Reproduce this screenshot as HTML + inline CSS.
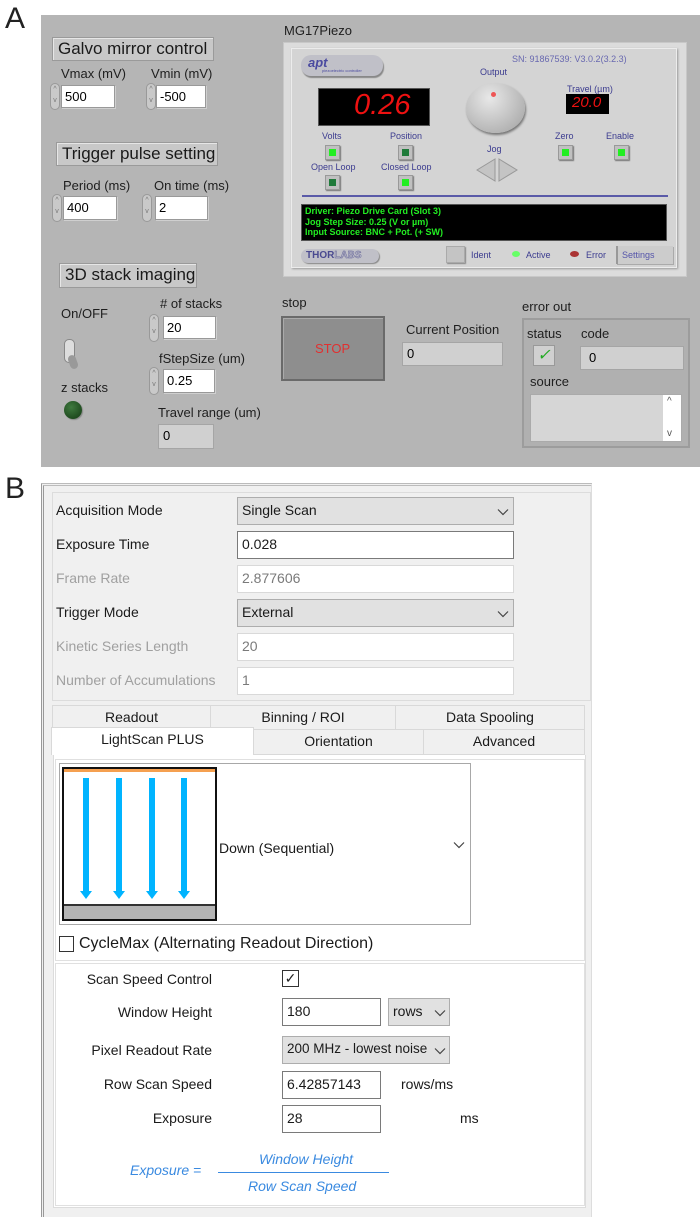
<!DOCTYPE html>
<html><head><meta charset="utf-8"><style>
*{margin:0;padding:0;box-sizing:border-box}
body{width:700px;height:1217px;background:#fff;position:relative;overflow:hidden;font-family:"Liberation Sans",sans-serif}
div,span,svg{position:absolute}
.t{white-space:nowrap;color:#222}
.A{font-size:13px;color:#1e1e1e}
.ttl{background:#c8c8c8;border:1px solid #9a9a9a;box-shadow:inset 1px 1px 0 #e6e6e6;font-size:17px;color:#1a1a1a;padding:1px 5px;white-space:nowrap}
.num{background:#fff;border:1px solid #999;box-shadow:1px 1px 0 #cfcfcf;font-size:13px;padding:3px 3px}
.ind{background:#d0d0d0;border:1px solid #a5a5a5;font-size:13px;padding:3px 4px}
.spin{width:10px;border:1px solid #999;border-radius:5px;background:#c9c9c9;font-size:7px;color:#777;text-align:center;line-height:11px}
.pt{font-size:9px;color:#3b3b8f;white-space:nowrap}
.led{width:15px;height:15px;background:#c0c0c0;border:1px solid #999;box-shadow:1px 1px 1px #777}
.led i{position:absolute;left:3px;top:3px;width:7px;height:7px;background:#22ee22}
.led.d i{background:#1f7a3a}
.B{font-size:14px;color:#1a1a1a}
.g{color:#a0a0a0}
.sel{background:#e1e1e1;border:1px solid #adadad;font-size:14px;padding:4px 4px;color:#1a1a1a}
.in{background:#fff;border:1px solid #7a7a7a;font-size:14px;padding:4px 4px;color:#1a1a1a}
.dis{background:#fff;border:1px solid #d9d9d9;font-size:14px;padding:4px 4px;color:#7a7a7a}
.tab{background:#f0f0f0;border:1px solid #d9d9d9;font-size:14px;text-align:center;color:#1a1a1a;line-height:22px}
.r{text-align:right;width:200px}
</style></head><body>
<svg width="0" height="0"><defs><symbol id="cv" viewBox="0 0 12 8"><polyline points="1,1.5 6,6.5 11,1.5" fill="none" stroke="#444" stroke-width="1.2"/></symbol></defs></svg>
<div class="t" style="left:5px;top:2px;font-size:30px">A</div>
<div style="left:41px;top:15px;width:659px;height:452px;background:#b5b5b5"></div>

<div class="ttl" style="left:52px;top:37px;width:162px;height:24px">Galvo mirror control</div>
<div class="t A" style="left:61px;top:66px">Vmax (mV)</div>
<div class="t A" style="left:151px;top:66px">Vmin (mV)</div>
<div class="spin" style="left:50px;top:83px;height:27px">^<br>v</div>
<div class="num" style="left:61px;top:85px;width:54px;height:23px">500</div>
<div class="spin" style="left:146px;top:83px;height:27px">^<br>v</div>
<div class="num" style="left:156px;top:85px;width:50px;height:23px">-500</div>

<div class="ttl" style="left:56px;top:142px;width:162px;height:24px">Trigger pulse setting</div>
<div class="t A" style="left:63px;top:178px">Period (ms)</div>
<div class="t A" style="left:154px;top:178px">On time (ms)</div>
<div class="spin" style="left:52px;top:194px;height:28px">^<br>v</div>
<div class="num" style="left:63px;top:196px;width:54px;height:24px">400</div>
<div class="spin" style="left:142px;top:194px;height:28px">^<br>v</div>
<div class="num" style="left:155px;top:196px;width:53px;height:24px">2</div>

<div class="ttl" style="left:59px;top:263px;width:138px;height:25px">3D stack imaging</div>
<div class="t A" style="left:61px;top:306px">On/OFF</div>
<div class="t A" style="left:160px;top:296px"># of stacks</div>
<div class="spin" style="left:149px;top:314px;height:28px">^<br>v</div>
<div class="num" style="left:163px;top:316px;width:53px;height:23px">20</div>
<div style="left:64px;top:339px;width:11px;height:24px;background:#ddd;border:1px solid #888;border-radius:5px"></div>
<div style="left:69px;top:355px;width:8px;height:14px;background:#999;border-radius:4px;transform:rotate(-20deg)"></div>
<div class="t A" style="left:61px;top:380px">z stacks</div>
<div style="left:64px;top:401px;width:18px;height:18px;border-radius:50%;background:radial-gradient(circle at 40% 35%,#3f7a3f,#123812);box-shadow:1px 1px 1px #888"></div>
<div class="t A" style="left:159px;top:351px">fStepSize (um)</div>
<div class="spin" style="left:149px;top:367px;height:28px">^<br>v</div>
<div class="num" style="left:163px;top:369px;width:52px;height:24px">0.25</div>
<div class="t A" style="left:158px;top:405px">Travel range (um)</div>
<div class="ind" style="left:158px;top:424px;width:56px;height:25px">0</div>

<div class="t A" style="left:284px;top:23px">MG17Piezo</div>
<div style="left:283px;top:42px;width:404px;height:235px;background:#dcdcdc;border:1px solid #c8c8c8"></div>
<div style="left:291px;top:48px;width:386px;height:220px;background:#d4d4d4;border:1px solid #ececec;box-shadow:1px 1px 2px #999"></div>
<div style="left:301px;top:55px;width:82px;height:21px;background:#c0c0c8;border-radius:10px;box-shadow:1px 2px 1px #888"></div>
<div class="t" style="left:308px;top:55px;font-size:13px;font-style:italic;font-weight:bold;color:#4a4aa0">apt</div>
<div class="t" style="left:322px;top:68px;font-size:4px;color:#4a4aa0">piezoelectric controller</div>
<div class="pt" style="left:512px;top:54px;color:#6868b0">SN: 91867539: V3.0.2(3.2.3)</div>
<div class="pt" style="left:480px;top:67px">Output</div>
<div style="left:318px;top:88px;width:112px;height:38px;background:#000;border:1px solid #555"></div>
<div class="t" style="left:354px;top:89px;font-size:29px;color:#ee1111;font-style:italic">0.26</div>
<div style="left:466px;top:83px;width:59px;height:50px;border-radius:50%;background:radial-gradient(circle at 40% 30%,#e8e8e8,#a0a0a0);box-shadow:1px 2px 2px #777"></div>
<div style="left:491px;top:92px;width:5px;height:5px;border-radius:50%;background:#e55"></div>
<div class="pt" style="left:567px;top:84px">Travel (µm)</div>
<div style="left:566px;top:94px;width:43px;height:20px;background:#000"></div>
<div class="t" style="left:572px;top:94px;font-size:15px;color:#ee1111;font-style:italic">20.0</div>
<div class="pt" style="left:322px;top:131px">Volts</div>
<div class="pt" style="left:390px;top:131px">Position</div>
<div class="pt" style="left:555px;top:131px">Zero</div>
<div class="pt" style="left:606px;top:131px">Enable</div>
<div class="led" style="left:325px;top:145px"><i></i></div>
<div class="led d" style="left:398px;top:145px"><i></i></div>
<div class="led" style="left:558px;top:145px"><i></i></div>
<div class="led" style="left:614px;top:145px"><i></i></div>
<div class="pt" style="left:487px;top:144px">Jog</div>
<div class="pt" style="left:311px;top:162px">Open Loop</div>
<div class="pt" style="left:381px;top:162px">Closed Loop</div>
<div class="led d" style="left:325px;top:175px"><i></i></div>
<div class="led" style="left:398px;top:175px"><i></i></div>
<svg style="left:475px;top:158px" width="45" height="24"><polygon points="20,1 20,23 2,12" fill="#c4c4c4" stroke="#999"/><polygon points="24,1 24,23 42,12" fill="#c4c4c4" stroke="#999"/></svg>
<div style="left:302px;top:195px;width:366px;height:2px;background:#5a5aa8"></div>
<div style="left:301px;top:204px;width:366px;height:37px;background:#000;border:1px solid #555"></div>
<div class="t" style="left:305px;top:206px;font-size:9px;line-height:10.5px;color:#22ee22;font-weight:bold">Driver: Piezo Drive Card (Slot 3)<br>Jog Step Size: 0.25 (V or µm)<br>Input Source: BNC + Pot. (+ SW)</div>
<div style="left:301px;top:249px;width:78px;height:14px;background:#c0c0c8;border-radius:7px;box-shadow:1px 1px 1px #888"></div>
<div class="t" style="left:306px;top:250px;font-size:10px;font-weight:bold;color:#4a4a90">THOR<span style="position:static;color:#b8b8c8;-webkit-text-stroke:0.4px #5a5a90">LABS</span></div>
<div style="left:446px;top:246px;width:19px;height:17px;background:#c4c4c4;border:1px solid #aaa;box-shadow:1px 1px 1px #888"></div>
<div class="pt" style="left:471px;top:250px">Ident</div>
<div style="left:512px;top:251px;width:8px;height:6px;border-radius:50%;background:#6f6"></div>
<div class="pt" style="left:526px;top:250px">Active</div>
<div style="left:570px;top:251px;width:9px;height:6px;border-radius:50%;background:#a33"></div>
<div class="pt" style="left:586px;top:250px">Error</div>
<div style="left:616px;top:246px;width:57px;height:18px;background:#ccc;border-left:2px solid #999;box-shadow:1px 1px 0 #aaa"></div>
<div class="pt" style="left:622px;top:250px;color:#55a">Settings</div>

<div class="t A" style="left:282px;top:295px">stop</div>
<div style="left:281px;top:316px;width:104px;height:65px;background:#8e8e8e;border:2px solid #6a6a6a;box-shadow:inset 1px 1px 0 #aaa"></div>
<div class="t" style="left:315px;top:341px;font-size:13px;color:#e03030">STOP</div>
<div class="t A" style="left:406px;top:322px">Current Position</div>
<div class="ind" style="left:402px;top:342px;width:101px;height:24px">0</div>

<div class="t A" style="left:522px;top:299px">error out</div>
<div style="left:522px;top:318px;width:168px;height:130px;background:#b0b0b0;border:2px solid #9c9c9c"></div>
<div class="t A" style="left:527px;top:326px">status</div>
<div class="t A" style="left:581px;top:326px">code</div>
<div style="left:533px;top:345px;width:22px;height:21px;background:#d0d0d0;border:1px solid #999;color:#2a2;font-size:16px;text-align:center;line-height:19px;font-style:italic">✓</div>
<div class="ind" style="left:580px;top:346px;width:104px;height:24px;padding-left:8px">0</div>
<div class="t A" style="left:530px;top:374px">source</div>
<div style="left:530px;top:394px;width:152px;height:48px;background:#d6d6d6;border:1px solid #aaa"></div>
<div style="left:663px;top:395px;width:18px;height:46px;background:#fff"></div>
<div class="t" style="left:667px;top:396px;font-size:10px;color:#555">^</div>
<div class="t" style="left:667px;top:428px;font-size:10px;color:#555">v</div>

<div class="t" style="left:5px;top:472px;font-size:30px">B</div>
<div style="left:41px;top:483px;width:551px;height:734px;background:#f0f0f0;border-left:3px double #999;border-top:3px double #bbb;border-right:1px solid #ddd"></div>
<div style="left:52px;top:492px;width:539px;height:209px;border:1px solid #dcdcdc"></div>
<div class="t B" style="left:56px;top:502px">Acquisition Mode</div>
<div class="sel" style="left:237px;top:497px;width:277px;height:28px">Single Scan</div>
<svg style="left:497px;top:508px" width="12" height="8"><use href="#cv"/></svg>
<div class="t B" style="left:56px;top:536px">Exposure Time</div>
<div class="in" style="left:237px;top:531px;width:277px;height:28px">0.028</div>
<div class="t B g" style="left:56px;top:570px">Frame Rate</div>
<div class="dis" style="left:237px;top:565px;width:277px;height:28px">2.877606</div>
<div class="t B" style="left:56px;top:604px">Trigger Mode</div>
<div class="sel" style="left:237px;top:599px;width:277px;height:28px">External</div>
<svg style="left:497px;top:610px" width="12" height="8"><use href="#cv"/></svg>
<div class="t B g" style="left:56px;top:638px">Kinetic Series Length</div>
<div class="dis" style="left:237px;top:633px;width:277px;height:28px">20</div>
<div class="t B g" style="left:56px;top:672px">Number of Accumulations</div>
<div class="dis" style="left:237px;top:667px;width:277px;height:28px">1</div>

<div class="tab" style="left:52px;top:705px;width:159px;height:25px">Readout</div>
<div class="tab" style="left:210px;top:705px;width:186px;height:25px">Binning / ROI</div>
<div class="tab" style="left:395px;top:705px;width:190px;height:25px">Data Spooling</div>
<div class="tab" style="left:253px;top:729px;width:171px;height:26px">Orientation</div>
<div class="tab" style="left:423px;top:729px;width:162px;height:26px">Advanced</div>
<div class="tab" style="left:51px;top:727px;width:203px;height:28px;background:#fff;border-bottom:none">LightScan PLUS</div>
<div style="left:53px;top:755px;width:533px;height:453px;background:#fff;border:1px solid #dcdcdc;border-top:none"></div>
<div style="left:55px;top:759px;width:530px;height:202px;border:1px solid #e0e0e0"></div>
<div style="left:59px;top:763px;width:412px;height:162px;border:1px solid #a8a8a8"></div>
<div style="left:62px;top:767px;width:155px;height:154px;border:2px solid #111;background:#fff"></div>
<div style="left:64px;top:769px;width:151px;height:3px;background:#f5a050"></div>
<div style="left:64px;top:904px;width:151px;height:15px;background:#b4b4b4;border-top:2px solid #333"></div>
<svg style="left:64px;top:775px" width="150" height="128"><g fill="#00b4ff"><rect x="19" y="3" width="6" height="115"/><polygon points="16,116 28,116 22,124"/><rect x="52" y="3" width="6" height="115"/><polygon points="49,116 61,116 55,124"/><rect x="85" y="3" width="6" height="115"/><polygon points="82,116 94,116 88,124"/><rect x="117" y="3" width="6" height="115"/><polygon points="114,116 126,116 120,124"/></g></svg>
<div class="t B" style="left:219px;top:840px">Down (Sequential)</div>
<svg style="left:453px;top:841px" width="12" height="8"><use href="#cv"/></svg>
<div style="left:59px;top:936px;width:15px;height:16px;border:1px solid #333;background:#fff"></div>
<div class="t" style="left:79px;top:935px;font-size:16px;color:#1a1a1a">CycleMax (Alternating Readout Direction)</div>

<div style="left:55px;top:963px;width:530px;height:243px;border:1px solid #e0e0e0"></div>
<div class="t B r" style="left:12px;top:971px">Scan Speed Control</div>
<div style="left:282px;top:970px;width:17px;height:17px;border:1px solid #333;background:#fff;font-size:14px;line-height:15px;text-align:center;color:#222">✓</div>
<div class="t B r" style="left:12px;top:1004px">Window Height</div>
<div class="in" style="left:282px;top:998px;width:99px;height:28px">180</div>
<div class="sel" style="left:388px;top:998px;width:62px;height:28px">rows</div>
<svg style="left:434px;top:1009px" width="12" height="8"><use href="#cv"/></svg>
<div class="t B r" style="left:12px;top:1042px">Pixel Readout Rate</div>
<div class="sel" style="left:282px;top:1036px;width:168px;height:28px;font-size:13.5px">200 MHz - lowest noise</div>
<svg style="left:434px;top:1047px" width="12" height="8"><use href="#cv"/></svg>
<div class="t B r" style="left:12px;top:1076px">Row Scan Speed</div>
<div class="in" style="left:282px;top:1071px;width:99px;height:28px">6.42857143</div>
<div class="t B" style="left:401px;top:1076px">rows/ms</div>
<div class="t B r" style="left:12px;top:1110px">Exposure</div>
<div class="in" style="left:282px;top:1105px;width:99px;height:28px">28</div>
<div class="t B" style="left:460px;top:1110px">ms</div>
<div class="t" style="left:130px;top:1162px;font-size:14px;font-style:italic;color:#3a8ae0">Exposure =</div>
<div style="left:218px;top:1172px;width:171px;height:1px;background:#3a8ae0"></div>
<div class="t" style="left:259px;top:1151px;font-size:14px;font-style:italic;color:#3a8ae0">Window Height</div>
<div class="t" style="left:248px;top:1178px;font-size:14px;font-style:italic;color:#3a8ae0">Row Scan Speed</div>
</body></html>
